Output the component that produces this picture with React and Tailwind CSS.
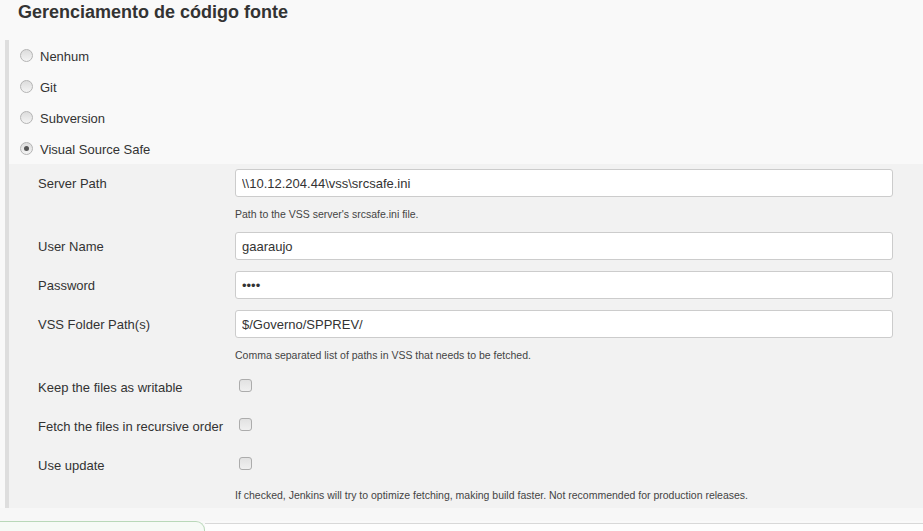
import React from 'react';

const font = { fontFamily: '"Liberation Sans", Arial, sans-serif' };

const Radio = ({ checked }) => (
  <span className="relative inline-flex h-[13px] w-[13px] shrink-0 items-center justify-center rounded-full border border-[#b4b4b4] bg-gradient-to-b from-[#dcdcdc] to-[#f4f4f4]">
    {checked && <span className="h-[5px] w-[5px] rounded-full bg-[#555]" />}
  </span>
);

const Checkbox = () => (
  <span className="inline-block h-[13px] w-[13px] rounded-[3px] border border-[#acacac] bg-gradient-to-b from-[#e2e2e2] to-[#f0f0f0]" />
);

const Field = ({ label, value }) => (
  <div className="flex h-[28px] items-center">
    <div className="w-[197px] shrink-0 pt-[2px] text-[13px] text-[#333]">{label}</div>
    <input
      readOnly
      value={value}
      className="h-[28px] flex-1 rounded-[3px] border border-[#cccccc] bg-white pl-[6px] pt-[1px] text-[13px] text-[#333] outline-none"
      style={font}
    />
  </div>
);

const Check = ({ label }) => (
  <div className="flex h-[28px] items-center">
    <div className="w-[201px] shrink-0 pt-[3px] text-[13px] text-[#333]">{label}</div>
    <span className="pt-[1px]">
      <Checkbox />
    </span>
  </div>
);

const Help = ({ children }) => (
  <div className="ml-[197px] h-[14px] text-[10.5px] leading-[14px] text-[#444]">{children}</div>
);

export default function App() {
  const options = ['Nenhum', 'Git', 'Subversion', 'Visual Source Safe'];
  return (
    <div className="h-[531px] w-[923px] overflow-hidden bg-[#f9f9f9]" style={font}>
      <h2 className="h-[40px] pl-[18px] pt-[1px] text-[18px] font-bold leading-[22px] text-[#333]">
        Gerenciamento de código fonte
      </h2>

      <div className="ml-[5px] border-l-4 border-[#dedede]">
        {options.map((o, i) => (
          <div key={o} className="flex h-[31px] items-center gap-[7px] pl-[11px] text-[13px] text-[#333]">
            <Radio checked={i === 3} />
            <span className="pt-[2px]">{o}</span>
          </div>
        ))}

        <div className="bg-[#f2f2f2] pb-[6px] pl-[29px] pr-[30px] pt-[5px]">
          <Field label="Server Path" value="\\10.12.204.44\vss\srcsafe.ini" />
          <div className="mb-[11px] mt-[10px]">
            <Help>Path to the VSS server's srcsafe.ini file.</Help>
          </div>
          <Field label="User Name" value="gaaraujo" />
          <div className="h-[11px]" />
          <Field label="Password" value="••••" />
          <div className="h-[11px]" />
          <Field label="VSS Folder Path(s)" value="$/Governo/SPPREV/" />
          <div className="mb-[10px] mt-[10px]">
            <Help>Comma separated list of paths in VSS that needs to be fetched.</Help>
          </div>
          <Check label="Keep the files as writable" />
          <div className="h-[11px]" />
          <Check label="Fetch the files in recursive order" />
          <div className="h-[11px]" />
          <Check label="Use update" />
          <div className="mt-[10px]">
            <Help>If checked, Jenkins will try to optimize fetching, making build faster. Not recommended for production releases.</Help>
          </div>
        </div>
      </div>

      <div className="h-[13px] bg-[#f7f7f7]" />
      <div className="flex h-[10px] items-start">
        <div className="h-[10px] w-[205px] rounded-tr-[9px] border-r border-t border-[#b9d8b9] bg-[#f6faf6]" />
        <div className="mt-[2px] h-[8px] flex-1 border-t border-[#d8d8d8] bg-[#fdfdfd]" />
      </div>
    </div>
  );
}
